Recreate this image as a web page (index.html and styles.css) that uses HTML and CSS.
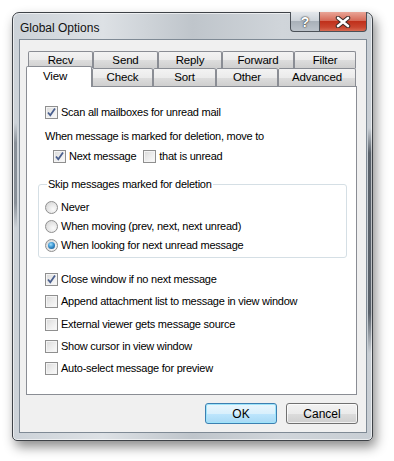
FILE: index.html
```html
<!DOCTYPE html>
<html lang="en">
<head>
  <meta charset="UTF-8">
  <title>Global Options</title>
  <link rel="stylesheet" href="styles.css">
</head>
<body>
  <div class="window">
    <div class="titlebar">
      <span class="title">Global Options</span>
      <div class="caption-btns">
        <span class="cap-btn help">?</span>
        <span class="cap-btn close">
          <svg width="16" height="12" viewBox="0 0 16 12">
            <path d="M3 2 L13 10 M13 2 L3 10" stroke="#3a2a28" stroke-width="4.5" stroke-linecap="round"/>
            <path d="M3 2 L13 10 M13 2 L3 10" stroke="#fff" stroke-width="2.6" stroke-linecap="round"/>
          </svg>
        </span>
      </div>
    </div>

    <div class="client">
      <div class="tabs">
        <div class="tab-row back">
          <div class="tab w-recv">Recv</div>
          <div class="tab w-send">Send</div>
          <div class="tab w-reply">Reply</div>
          <div class="tab w-forward">Forward</div>
          <div class="tab w-filter">Filter</div>
        </div>
        <div class="tab-row front">
          <div class="tab active w-view">View</div>
          <div class="tab w-check">Check</div>
          <div class="tab w-sort">Sort</div>
          <div class="tab w-other">Other</div>
          <div class="tab w-advanced">Advanced</div>
        </div>
      </div>

      <div class="panel">
        <label class="opt row-scan"><span class="cb checked"></span>Scan all mailboxes for unread mail</label>
        <div class="opt row-when">When message is marked for deletion, move to</div>
        <div class="opt row-next">
          <label class="opt"><span class="cb checked"></span>Next message</label>
          <label class="opt unread"><span class="cb"></span>that is unread</label>
        </div>

        <fieldset class="group">
          <legend>Skip messages marked for deletion</legend>
          <label class="opt r1"><span class="rb"></span>Never</label>
          <label class="opt r2"><span class="rb"></span>When moving (prev, next, next unread)</label>
          <label class="opt r2"><span class="rb on"></span>When looking for next unread message</label>
        </fieldset>

        <label class="opt c1"><span class="cb checked"></span>Close window if no next message</label>
        <label class="opt c2"><span class="cb"></span>Append attachment list to message in view window</label>
        <label class="opt c3"><span class="cb"></span>External viewer gets message source</label>
        <label class="opt c2"><span class="cb"></span>Show cursor in view window</label>
        <label class="opt c4"><span class="cb"></span>Auto-select message for preview</label>
      </div>

      <div class="buttons">
        <button class="btn default">OK</button>
        <button class="btn">Cancel</button>
      </div>
    </div>
  </div>
</body>
</html>
```

FILE: styles.css
```css
body {
  margin: 0;
  padding: 12px 21px 20px 12px;
  background: #fff;
  font-family: "Liberation Sans", Arial, sans-serif;
  font-size: 11px;
  letter-spacing: -0.25px;
  color: #000;
}

.window {
  box-sizing: border-box;
  width: 361px;
  height: 429px;
  border: 1px solid #3e4247;
  border-radius: 7px 7px 5px 5px;
  padding: 0 5px 7px 6px;
  display: flex;
  flex-direction: column;
  background:
    linear-gradient(to bottom, rgba(70, 78, 88, 0) 115px, rgba(70, 78, 88, 0.85) 140px, rgba(70, 78, 88, 0.85) 300px, rgba(70, 78, 88, 0) 340px) right 0 top 0 / 4px 100% no-repeat,
    linear-gradient(to bottom, rgba(90, 98, 108, 0) 110px, rgba(90, 98, 108, 0.6) 130px, rgba(90, 98, 108, 0.6) 190px, rgba(90, 98, 108, 0) 215px) left 1px top 0 / 3px 100% no-repeat,
    linear-gradient(to right, #ccd2d8 0, #dde1e5 25%, #bfc5cb 50%, #d0d5da 75%, #c8ced4 100%);
  box-shadow: 3px 6px 12px rgba(0, 0, 0, 0.45), inset 0 0 0 1px rgba(255, 255, 255, 0.6);
}

.titlebar {
  height: 27px;
  display: flex;
  align-items: flex-start;
}

.title {
  padding: 8px 0 0 1px;
  line-height: 14px;
  font-size: 12px;
  letter-spacing: 0;
  color: #111;
}

.caption-btns {
  margin-left: auto;
  margin-top: -1px;
  display: flex;
}

.cap-btn {
  box-sizing: border-box;
  height: 20px;
  display: flex;
  align-items: center;
  justify-content: center;
  border: 1px solid #4b5158;
  border-top: none;
}

.help {
  width: 29px;
  border-radius: 0 0 0 4px;
  border-right: none;
  background: linear-gradient(to bottom, #e4e8ec 0, #cdd3d9 45%, #a9b1b9 50%, #bcc3ca 100%);
  color: #fff;
  font-weight: bold;
  font-size: 14px;
  letter-spacing: 0;
  text-shadow: 0 0 2px #333, 0 0 1px #222;
}

.close {
  width: 48px;
  border-radius: 0 0 4px 0;
  background: linear-gradient(to bottom, #e9a597 0, #d66a58 45%, #c0301b 50%, #c9452f 80%, #d76a52 100%);
}

.client {
  flex: 1;
  background: #f0f0f0;
  border: 1px solid #7f8a95;
  padding: 11px 8px 8px 6px;
  display: flex;
  flex-direction: column;
}

.tabs {
  display: flex;
  flex-direction: column;
}

.tab-row {
  display: flex;
}

.tab-row.back {
  margin-left: 2px;
  height: 17px;
}

.tab-row.front {
  height: 18px;
  align-items: flex-end;
}

.tab {
  box-sizing: border-box;
  height: 100%;
  border: 1px solid #8a8d94;
  border-bottom: none;
  border-radius: 2px 2px 0 0;
  background: linear-gradient(to bottom, #f3f3f3 0, #ebebeb 50%, #dddddd 51%, #cfcfcf 100%);
  text-align: center;
  font-size: 11.5px;
  letter-spacing: -0.15px;
  line-height: 16px;
}

.tab.active {
  height: 21px;
  margin-bottom: -1px;
  position: relative;
  z-index: 1;
  background: #fff;
  padding-right: 8px;
  line-height: 18px;
}

.w-recv { width: 65px; }
.w-send { width: 65px; }
.w-reply { width: 64px; }
.w-forward { width: 72px; }
.w-filter { width: 62px; }
.w-view { width: 66px; }
.w-check { width: 61px; }
.w-sort { width: 63px; }
.w-other { width: 62px; }
.w-advanced { width: 78px; }

.panel {
  box-sizing: border-box;
  width: 331px;
  height: 309px;
  border: 1px solid #8a8d94;
  background: #fff;
  padding: 17px 0 0 18px;
  display: flex;
  flex-direction: column;
  align-items: flex-start;
}

.opt {
  display: flex;
  align-items: center;
  height: 16px;
  line-height: 16px;
  white-space: nowrap;
}

.row-when { margin-top: 8px; }
.row-next { margin-top: 4px; margin-left: 8px; }
.unread { margin-left: 7px; }

.group {
  box-sizing: border-box;
  width: 309px;
  margin: 12px 0 0 -7px;
  padding: 0 0 4px 6px;
  border: 1px solid #d5dfe5;
  border-radius: 3px;
}

.group legend {
  margin-left: 2px;
  padding: 0 1px;
  line-height: 16px;
}

.r1 { margin-top: 7px; }
.r2 { margin-top: 3px; }
.c1 { margin-top: 13px; }
.c2 { margin-top: 6px; }
.c3 { margin-top: 7px; }
.c4 { margin-top: 6px; }

.cb {
  box-sizing: border-box;
  width: 13px;
  height: 13px;
  margin-right: 3px;
  border: 1px solid #8f8f8f;
  background: linear-gradient(135deg, #d9d9d9 0, #ececec 50%, #fbfbfb 100%);
  box-shadow: inset 0 0 0 1px #f4f4f4;
  flex-shrink: 0;
}

.cb.checked {
  background:
    url("data:image/svg+xml;utf8,<svg xmlns='http://www.w3.org/2000/svg' width='11' height='11' viewBox='0 0 11 11'><path d='M2 5.5 L4.3 8.3 L9 1.6' fill='none' stroke='%234a5f8e' stroke-width='1.8'/></svg>") center / 11px 11px no-repeat,
    linear-gradient(135deg, #d9d9d9 0, #ececec 50%, #fbfbfb 100%);
}

.rb {
  box-sizing: border-box;
  width: 13px;
  height: 13px;
  margin-right: 3px;
  border: 1px solid #8f8f8f;
  border-radius: 50%;
  background: radial-gradient(circle at 65% 65%, #fbfbfb 0, #e6e6e6 50%, #cfcfcf 100%);
  flex-shrink: 0;
  display: flex;
  align-items: center;
  justify-content: center;
}

.rb.on::after {
  content: "";
  width: 7px;
  height: 7px;
  border-radius: 50%;
  background: radial-gradient(circle at 40% 35%, #9ee0ff 0, #3b93cf 45%, #0f4a80 100%);
}

.buttons {
  display: flex;
  justify-content: flex-end;
  margin-top: 8px;
}

.btn {
  box-sizing: border-box;
  width: 72px;
  height: 21px;
  margin-left: 9px;
  border: 1px solid #707070;
  border-radius: 3px;
  background: linear-gradient(to bottom, #f2f2f2 0, #ebebeb 50%, #dddddd 51%, #cfcfcf 100%);
  font-family: "Liberation Sans", Arial, sans-serif;
  font-size: 12px;
  color: #000;
  padding: 0;
  box-shadow: inset 0 0 0 1px rgba(255, 255, 255, 0.7);
}

.btn.default {
  border-color: #3c7fb1;
  background: linear-gradient(to bottom, #eaf6fd 0, #d9f0fc 50%, #bee6fd 51%, #a7d9f5 100%);
  box-shadow: inset 0 0 0 1px #9ee4fa;
}
```
